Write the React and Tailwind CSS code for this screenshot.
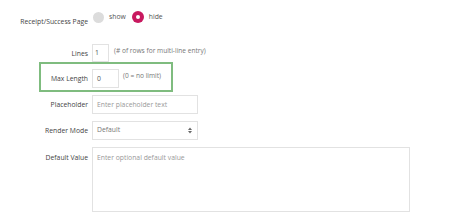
import React from 'react'

const font = { fontFamily: '"Open Sans", "Noto Sans", sans-serif' }

function Label({ children, className = '' }) {
  return (
    <div className={`w-[88px] shrink-0 text-right text-[6.8px] leading-[10px] text-[#444] ${className}`}>
      {children}
    </div>
  )
}

export default function App() {
  return (
    <div className="w-[474px] h-[223px] bg-white pt-[11px]" style={font}>
      {/* receipt / success page */}
      <div className="flex items-start">
        <Label className="mt-[6px]">Receipt/Success Page</Label>
        <div className="ml-[5px] flex items-center h-[12px] text-[6.8px] text-[#555]">
          <span className="w-[11px] h-[11px] rounded-full bg-[#dcdcdc]"></span>
          <span className="ml-[5px]">show</span>
          <span className="ml-[6px] w-[12px] h-[12px] rounded-full bg-[#c8195f] flex items-center justify-center">
            <span className="w-[4px] h-[4px] rounded-full bg-white"></span>
          </span>
          <span className="ml-[5px]">hide</span>
        </div>
      </div>

      {/* lines */}
      <div className="flex items-start mt-[17px]">
        <Label className="mt-[5px]">Lines</Label>
        <div className="ml-[4px] w-[17px] h-[18px] border border-[#e2e2e2] text-[6.8px] text-[#555] pl-[2px] leading-[16px]">1</div>
        <div className="ml-[5px] mt-[2px] text-[6.6px] leading-[10px] text-[#777]">(# of rows for multi-line entry)</div>
      </div>

      {/* max length (highlighted) */}
      <div className="ml-[39px] w-[134px] h-[30px] border-2 border-[#7fbc7f] flex items-start pt-[5px]">
        <div className="w-[47px] shrink-0 text-right text-[6.8px] leading-[10px] text-[#444] mt-[5px]">Max Length</div>
        <div className="ml-[4px] w-[27px] h-[19px] border border-[#e2e2e2] text-[6.8px] text-[#555] pl-[4px] leading-[17px]">0</div>
        <div className="ml-[4px] mt-[2px] text-[6.6px] leading-[10px] text-[#777]">(0 = no limit)</div>
      </div>

      {/* placeholder */}
      <div className="flex items-center mt-[3px]">
        <Label>Placeholder</Label>
        <div className="ml-[4px] w-[106px] h-[19px] border border-[#e2e2e2] text-[6.8px] text-[#999] pl-[4px] leading-[17px]">
          Enter placeholder text
        </div>
      </div>

      {/* render mode */}
      <div className="flex items-center mt-[7px]">
        <Label>Render Mode</Label>
        <div className="ml-[4px] w-[106px] h-[19px] border border-[#e2e2e2] text-[6.8px] text-[#777] pl-[4px] pr-[5px] flex items-center justify-between">
          <span>Default</span>
          <svg width="4" height="7" viewBox="0 0 4 7" className="text-[#666]">
            <path d="M0 3 L2 0.5 L4 3 Z" fill="currentColor" />
            <path d="M0 4 L2 6.5 L4 4 Z" fill="currentColor" />
          </svg>
        </div>
      </div>

      {/* default value */}
      <div className="flex items-start mt-[7px]">
        <Label className="mt-[6px]">Default Value</Label>
        <div className="ml-[4px] w-[318px] h-[65px] border border-[#e2e2e2] text-[6.8px] text-[#999] pl-[4px] pt-[5px] leading-[10px]">
          Enter optional default value
        </div>
      </div>
    </div>
  )
}
